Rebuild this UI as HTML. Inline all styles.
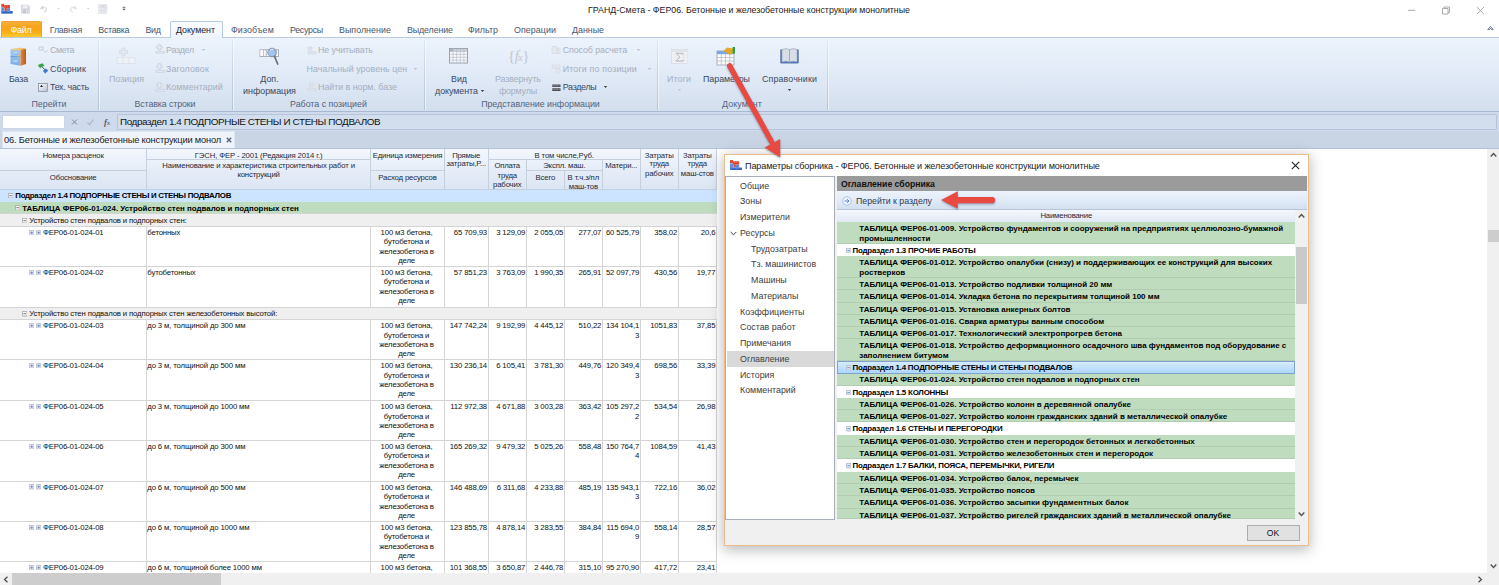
<!DOCTYPE html><html><head><meta charset="utf-8"><title>ГРАНД-Смета</title><style>
*{margin:0;padding:0;box-sizing:border-box}
html,body{width:1499px;height:585px;overflow:hidden;background:#fff}
body{font-family:"Liberation Sans",sans-serif;position:relative;color:#1e1e1e}
.b{position:absolute}
.t{position:absolute;white-space:nowrap;overflow:visible}
.rb{font-size:8.9px;color:#3a4962}
.rbd{font-size:8.9px;color:#a5afc0}
.rg{font-size:8.9px;color:#52647f}
.tab{font-size:8.9px;color:#48566e}
.ttl{font-size:8.8px;color:#222}
.fx{font-size:9.3px;color:#111}
.dt{font-size:8.95px;color:#222}
.h{font-size:7.75px;color:#1f2a3a}
.c{font-size:7.75px;color:#111}
.cb{font-size:7.9px;font-weight:700;color:#000}
.tb{font-size:7.9px;font-weight:700;color:#000}
.db{font-size:8.0px;font-weight:700;color:#000}
.dsb{font-size:7.9px;font-weight:700;color:#000}
.dl{font-size:8.87px;color:#222}
.mn{font-size:8.85px;color:#404040}
</style></head><body>
<div class="t ttl" style="top:4.00px;line-height:12px;height:12px;left:499.00px;width:500px;text-align:center;">ГРАНД-Смета - ФЕР06. Бетонные и железобетонные конструкции монолитные</div>
<svg class="b" style="left:1400px;top:0" width="99" height="20" viewBox="0 0 99 20"><g stroke="#a3a3a3" stroke-width="0.900" fill="none"><path d="M8 10.300h7.200"/><path d="M42.500 8.500h5.500v5.500h-5.500z M44 8.500v-1.500h5.500v5.500h-1.500"/><path d="M76.800 7l7.200 7.200M84 7l-7.200 7.200"/></g></svg>
<svg class="b" style="left:0;top:0" width="140" height="20" viewBox="0 0 140 20"><g><g transform="translate(1.300,3.800) scale(0.950)"><rect x="0" y="7.600" width="12" height="2.800" fill="#3568c6"/><rect x="0" y="3.600" width="3.100" height="5" fill="#5a8fe2"/><rect x="5.600" y="4.600" width="3.600" height="4" fill="#5a8fe2"/><rect x="0" y="0" width="3" height="3.300" fill="#e2432f"/><rect x="3" y="1.300" width="6.100" height="3.300" fill="#e2432f"/><rect x="3.500" y="4.500" width="2.200" height="2.900" fill="#d93a28"/><path d="M0.800 1h0.800M3.800 2.300h0.800M6.300 2.300h0.800" stroke="#f7c0b6" stroke-width="0.600"/></g><path d="M21.300 5h7l1.200 1.200v7h-8.200z" fill="#d9dce2" stroke="#c9ccd4" stroke-width="0.500"/><rect x="23" y="5.300" width="4.500" height="2.800" fill="#eef0f3"/><rect x="23" y="9.800" width="5" height="3.400" fill="#c3c7cf"/><rect x="26.200" y="10.300" width="1.200" height="2.400" fill="#eef0f3"/><path d="M40.500 8.500l2.500-2.500M40.500 8.500l3 0.500M41 8.200q4-2.500 5.500 0.800q0.500 2.500-2.500 3.200" stroke="#cfd2d9" fill="none" stroke-width="1"/><path d="M76.500 8.500l-2.500-2.500M76.500 8.500l-3 0.500M76 8.200q-4-2.500-5.500 0.800q-0.500 2.500 2.500 3.200" stroke="#d9dbe1" fill="none" stroke-width="1"/><rect x="98.500" y="4.500" width="8.500" height="9" fill="#e9ebef" stroke="#dadde3" stroke-width="0.500"/><path d="M98.500 7.500h8.500M98.500 10.500h8.500M101.500 7.500v6M104.300 7.500v6" stroke="#d5d8df" stroke-width="0.500"/><rect x="100" y="5.200" width="5.500" height="1.500" fill="#d5d8df"/><path d="M57.500 8h2.200l-1.100 1.300z M87 8h2.200l-1.100 1.300z" fill="#c2c5cc"/><path d="M122.600 7.300h2.800" stroke="#444" stroke-width="0.800"/><path d="M122.400 8.800h3.200l-1.600 1.800z" fill="#444"/></g></svg>
<div class="b " style="left:0.00px;top:37.00px;width:1499.00px;height:1.00px;background:#bccbe0"></div>
<div class="b " style="left:0.70px;top:21.20px;width:41.00px;height:16.30px;background:linear-gradient(#f7b03a 0%,#f7a41c 30%,#f9a60f 55%,#fbbd22 85%,#fccb30 100%);border:1px solid #eea030;border-bottom:none;border-radius:2px 2px 0 0"></div>
<div class="t tab" style="top:24.00px;line-height:12px;height:12px;letter-spacing:-0.220px;left:-0.11px;width:42px;text-align:center;color:#fff">Файл</div>
<div class="b " style="left:170.00px;top:21.00px;width:53.00px;height:17.20px;background:linear-gradient(#fbfcfe,#eef3fb);border:1px solid #b9c9df;border-bottom:none;border-radius:2px 2px 0 0"></div>
<div class="t tab" style="top:24.00px;line-height:12px;height:12px;letter-spacing:-0.225px;left:49.80px;">Главная</div>
<div class="t tab" style="top:24.00px;line-height:12px;height:12px;letter-spacing:-0.297px;left:98.30px;">Вставка</div>
<div class="t tab" style="top:24.00px;line-height:12px;height:12px;letter-spacing:-0.367px;left:145.50px;">Вид</div>
<div class="t tab" style="top:24.00px;line-height:12px;height:12px;letter-spacing:-0.060px;left:176.00px;color:#1e2430">Документ</div>
<div class="t tab" style="top:24.00px;line-height:12px;height:12px;letter-spacing:0.112px;left:231.00px;">Физобъем</div>
<div class="t tab" style="top:24.00px;line-height:12px;height:12px;letter-spacing:-0.299px;left:290.00px;">Ресурсы</div>
<div class="t tab" style="top:24.00px;line-height:12px;height:12px;letter-spacing:0.020px;left:339.00px;">Выполнение</div>
<div class="t tab" style="top:24.00px;line-height:12px;height:12px;letter-spacing:-0.129px;left:407.00px;">Выделение</div>
<div class="t tab" style="top:24.00px;line-height:12px;height:12px;letter-spacing:0.017px;left:468.00px;">Фильтр</div>
<div class="t tab" style="top:24.00px;line-height:12px;height:12px;letter-spacing:0.046px;left:514.00px;">Операции</div>
<div class="t tab" style="top:24.00px;line-height:12px;height:12px;letter-spacing:-0.025px;left:572.00px;">Данные</div>
<svg class="b" style="left:1487px;top:25px" width="7" height="6" viewBox="0 0 7 6"><path d="M0.800 4.600l2.700-3.200 2.700 3.200h-1.600l-1.100-1.300-1.100 1.300z" fill="#fff" stroke="#5a6478" stroke-width="0.900" stroke-linejoin="round"/></svg>
<div class="b " style="left:0.00px;top:38.00px;width:1499.00px;height:73.50px;background:linear-gradient(#ecf3fc 0%,#e3ecf8 40%,#d7e2f1 85%,#d3dfee 100%)"></div>
<div class="b " style="left:0.00px;top:111.00px;width:1499.00px;height:1.20px;background:#a9b9cf"></div>
<div class="b " style="left:98.30px;top:40.00px;width:1.00px;height:70.00px;background:linear-gradient(rgba(190,203,222,0.3),#b7c5da)"></div>
<div class="b " style="left:99.30px;top:40.00px;width:1.00px;height:70.00px;background:rgba(255,255,255,0.55)"></div>
<div class="b " style="left:232.30px;top:40.00px;width:1.00px;height:70.00px;background:linear-gradient(rgba(190,203,222,0.3),#b7c5da)"></div>
<div class="b " style="left:233.30px;top:40.00px;width:1.00px;height:70.00px;background:rgba(255,255,255,0.55)"></div>
<div class="b " style="left:424.40px;top:40.00px;width:1.00px;height:70.00px;background:linear-gradient(rgba(190,203,222,0.3),#b7c5da)"></div>
<div class="b " style="left:425.40px;top:40.00px;width:1.00px;height:70.00px;background:rgba(255,255,255,0.55)"></div>
<div class="b " style="left:657.30px;top:40.00px;width:1.00px;height:70.00px;background:linear-gradient(rgba(190,203,222,0.3),#b7c5da)"></div>
<div class="b " style="left:658.30px;top:40.00px;width:1.00px;height:70.00px;background:rgba(255,255,255,0.55)"></div>
<div class="b " style="left:827.30px;top:40.00px;width:1.00px;height:70.00px;background:linear-gradient(rgba(190,203,222,0.3),#b7c5da)"></div>
<div class="b " style="left:828.30px;top:40.00px;width:1.00px;height:70.00px;background:rgba(255,255,255,0.55)"></div>
<div class="t rg" style="top:98.00px;line-height:12px;height:12px;letter-spacing:-0.038px;left:-51.02px;width:200px;text-align:center;">Перейти</div>
<div class="t rg" style="top:98.00px;line-height:12px;height:12px;letter-spacing:-0.131px;left:64.93px;width:200px;text-align:center;">Вставка строки</div>
<div class="t rg" style="top:98.00px;line-height:12px;height:12px;letter-spacing:-0.028px;left:228.49px;width:200px;text-align:center;">Работа с позицией</div>
<div class="t rg" style="top:98.00px;line-height:12px;height:12px;letter-spacing:-0.036px;left:440.48px;width:200px;text-align:center;">Представление информации</div>
<div class="t rg" style="top:98.00px;line-height:12px;height:12px;letter-spacing:0.065px;left:642.03px;width:200px;text-align:center;">Документ</div>
<svg class="b" style="left:9px;top:46px" width="19" height="22" viewBox="0 0 19 22"><defs><linearGradient id="cb1" x1="0" y1="0" x2="0" y2="1"><stop offset="0" stop-color="#a9cdf2"/><stop offset="1" stop-color="#7eaee6"/></linearGradient><linearGradient id="cb2" x1="0" y1="0" x2="1" y2="0"><stop offset="0" stop-color="#e58a3a"/><stop offset="1" stop-color="#b85a18"/></linearGradient></defs><path d="M1.5 3.2l10-1.5v18l-10-1.6z" fill="url(#cb1)"/><path d="M11.5 1.7l5.5 1.3v15l-5.5 1.7z" fill="url(#cb2)"/><path d="M1.5 3.2l10-1.5 5.5 1.3-3 0.6-8.500 0.900z" fill="#f6c779"/><path d="M1.5 10.600l10 0.100" stroke="#5f8fcc" stroke-width="0.700"/><path d="M4 6.200l4.500-0.400v1.500l-4.500 0.300z M4 14.300l4.500 0.200v1.500l-4.500-0.300z" fill="#d9e9fa" stroke="#7ea3d6" stroke-width="0.300"/><path d="M7.500 10.300l1.800-1.600 1.800 1.700z" fill="#f0c24d"/></svg>
<div class="t rb" style="top:73.00px;line-height:12px;height:12px;letter-spacing:-0.180px;left:-11.59px;width:60px;text-align:center;">База</div>
<svg class="b" style="left:38px;top:45px" width="11" height="10" viewBox="0 0 11 10"><path d="M1 2h4v3h-4z M5.5 5.5l2 2 2-2" stroke="#c3cad6" fill="none" stroke-width="0.9"/></svg>
<div class="t rbd" style="top:43.80px;line-height:12px;height:12px;letter-spacing:-0.425px;left:50.00px;">Смета</div>
<svg class="b" style="left:38px;top:63px" width="11" height="11" viewBox="0 0 11 11"><path d="M3.800 3.500l3.500 3.800" stroke="#444" stroke-width="0.900"/><path d="M0.300 1.800l4-1.500 2.300 2.500-4 1.800z" fill="#35a844"/><path d="M0.300 1.800l2.300 2.800v1l-2.300-2.700z" fill="#1f7d2c"/><path d="M5.300 7.600l2.500-2.100 2.500 2.100-2.500 2.300z" fill="#3a78dc"/><path d="M5.300 7.600l2.500 2.300v0.800l-2.500-2.200z" fill="#2455a8"/></svg>
<div class="t rb" style="top:62.80px;line-height:12px;height:12px;letter-spacing:0.114px;left:50.00px;">Сборник</div>
<svg class="b" style="left:38px;top:82.500px" width="10" height="9" viewBox="0 0 10 9"><defs><linearGradient id="tc" x1="0" y1="0" x2="1" y2="1"><stop offset="0" stop-color="#ffffff"/><stop offset="1" stop-color="#b9c3d6"/></linearGradient></defs><rect x="0.500" y="0.500" width="8.800" height="7.800" fill="url(#tc)" stroke="#7a8190" stroke-width="0.700"/><path d="M2 4l1.500-2.200 1.500 2.200z" fill="#222"/></svg>
<div class="t rb" style="top:81.30px;line-height:12px;height:12px;letter-spacing:-0.283px;left:50.00px;">Тех. часть</div>
<svg class="b" style="left:116px;top:47px" width="20" height="18" viewBox="0 0 20 18"><path d="M6 1h3v2.5h2.5v3h-2.5v2.5h-3v-2.5h-2.5v-3h2.5z" fill="#e3e8f0" stroke="#cfd6e2" stroke-width="0.6"/><rect x="1" y="10.5" width="18" height="6" fill="#eef1f6" stroke="#d5dbe6" stroke-width="0.6"/><path d="M7 10.5v6M13 10.5v6" stroke="#d5dbe6" stroke-width="0.6"/></svg>
<div class="t rbd" style="top:73.00px;line-height:12px;height:12px;letter-spacing:-0.027px;left:86.49px;width:80px;text-align:center;">Позиция</div>
<svg class="b" style="left:155px;top:44.3px" width="10" height="10" viewBox="0 0 10 10"><path d="M3.500 0.500h2v1.800h1.800v2h-1.800v1.800h-2v-1.800h-1.800v-2h1.800z M1 7.300h8.500v2h-8.500z" fill="#e6eaf1" stroke="#c3cad7" stroke-width="0.600"/></svg>
<div class="t rbd" style="top:43.80px;line-height:12px;height:12px;letter-spacing:-0.236px;left:166.00px;">Раздел</div>
<svg class="b" style="left:155px;top:63.3px" width="10" height="10" viewBox="0 0 10 10"><path d="M3.500 0.500h2v1.800h1.800v2h-1.800v1.800h-2v-1.800h-1.800v-2h1.800z M1 7.300h8.500v2h-8.500z" fill="#e6eaf1" stroke="#c3cad7" stroke-width="0.600"/></svg>
<div class="t rbd" style="top:62.80px;line-height:12px;height:12px;letter-spacing:0.129px;left:166.00px;">Заголовок</div>
<svg class="b" style="left:155px;top:81.8px" width="10" height="10" viewBox="0 0 10 10"><path d="M3.500 0.500h2v1.800h1.800v2h-1.800v1.800h-2v-1.800h-1.800v-2h1.800z M1 7.300h8.500v2h-8.500z" fill="#e6eaf1" stroke="#c3cad7" stroke-width="0.600"/></svg>
<div class="t rbd" style="top:81.30px;line-height:12px;height:12px;letter-spacing:0.086px;left:166.00px;">Комментарий</div>
<svg class="b" style="left:201px;top:48px" width="5" height="4" viewBox="0 0 5 4"><path d="M0.800 1h3.400l-1.700 2z" fill="#b9c1ce"/></svg>
<svg class="b" style="left:258px;top:46px" width="24" height="22" viewBox="0 0 24 22"><rect x="2" y="3.800" width="18.600" height="6.600" fill="#f7f8fb" stroke="#9aa1ad" stroke-width="0.800"/><path d="M5.300 3.800v6.600M8.300 3.800v6.600M17.500 3.800v6.600" stroke="#9aa1ad" stroke-width="0.700"/><rect x="2.400" y="4.200" width="2.600" height="5.800" fill="#fff"/><circle cx="14.100" cy="6.500" r="4.300" fill="#8db6ea" fill-opacity="0.800" stroke="#8893a8" stroke-width="1"/><path d="M11.800 4.600q1.500-1.700 3.500-1.200" stroke="#e8f1fc" stroke-width="1" fill="none"/><path d="M16.500 10.300l3.200 7.700" stroke="#6a707c" stroke-width="1.700" stroke-linecap="round"/></svg>
<div class="t rb" style="top:73.30px;line-height:12px;height:12px;left:229.50px;width:80px;text-align:center;">Доп.</div>
<div class="t rb" style="top:85.00px;line-height:12px;height:12px;letter-spacing:-0.006px;left:229.50px;width:80px;text-align:center;">информация</div>
<svg class="b" style="left:307px;top:45px" width="10" height="10" viewBox="0 0 10 10"><path d="M1 2h4v3h-4z M1 6.5h8v2.5h-8z" fill="#dfe4ec" stroke="#cdd3de" stroke-width="0.5"/></svg>
<div class="t rbd" style="top:43.80px;line-height:12px;height:12px;letter-spacing:-0.123px;left:318.00px;">Не учитывать</div>
<div class="t rbd" style="top:62.80px;line-height:12px;height:12px;letter-spacing:0.045px;left:306.50px;">Начальный уровень цен</div>
<svg class="b" style="left:413px;top:66.5px" width="5" height="4" viewBox="0 0 5 4"><path d="M0.800 1h3.400l-1.700 2z" fill="#b9c1ce"/></svg>
<svg class="b" style="left:307px;top:82px" width="10" height="10" viewBox="0 0 10 10"><path d="M2.5 1h3.5v4h-3.5z M1 6.5h8v2.5h-8z" fill="#dfe4ec" stroke="#cdd3de" stroke-width="0.5"/></svg>
<div class="t rbd" style="top:81.30px;line-height:12px;height:12px;letter-spacing:-0.034px;left:318.00px;">Найти в норм. базе</div>
<svg class="b" style="left:449.300px;top:48.300px" width="19" height="15.500" viewBox="0 0 19 15.500"><rect x="0.500" y="0.500" width="18" height="14.500" fill="#f6f7fa" stroke="#9299a6" stroke-width="0.900"/><rect x="0.900" y="0.900" width="17.200" height="2.400" fill="#c9ced8"/><rect x="0.900" y="0.900" width="3" height="2.400" fill="#aab1be"/><path d="M0.500 3.500h18M0.500 6.400h18M0.500 9.300h18M0.500 12.200h18M4.100 0.500v14.500M7.700 0.500v14.500M11.300 0.500v14.500M14.900 0.500v14.500" stroke="#b1b7c3" stroke-width="0.600"/></svg>
<div class="t rb" style="top:73.30px;line-height:12px;height:12px;left:419.00px;width:80px;text-align:center;">Вид</div>
<div class="t rb" style="top:85.00px;line-height:12px;height:12px;letter-spacing:-0.044px;left:416.48px;width:80px;text-align:center;">документа</div>
<svg class="b" style="left:479.5px;top:88.5px" width="5" height="4" viewBox="0 0 5 4"><path d="M0.800 1h3.400l-1.700 2z" fill="#444"/></svg>
<div class="t" style="left:498.400px;top:45px;width:40px;height:22px;line-height:22px;text-align:center;font-family:'Liberation Serif',serif;font-size:15.500px;color:#c2c7d1;letter-spacing:-0.6px">{<i style="font-size:14.500px">f</i><i style="font-size:10.500px">x</i>}</div>
<div class="t rbd" style="top:73.30px;line-height:12px;height:12px;letter-spacing:-0.117px;left:477.94px;width:80px;text-align:center;">Развернуть</div>
<div class="t rbd" style="top:85.00px;line-height:12px;height:12px;letter-spacing:-0.183px;left:477.91px;width:80px;text-align:center;">формулы</div>
<svg class="b" style="left:551px;top:45px" width="10" height="10" viewBox="0 0 10 10"><path d="M1 1.5h5v7h-5z M6.5 3h2.5v5.5h-2.5z" fill="#e3e7ee" stroke="#cdd3de" stroke-width="0.5"/></svg>
<div class="t rbd" style="top:43.80px;line-height:12px;height:12px;letter-spacing:-0.088px;left:562.70px;">Способ расчета</div>
<svg class="b" style="left:635.5px;top:48px" width="5" height="4" viewBox="0 0 5 4"><path d="M0.800 1h3.400l-1.700 2z" fill="#b9c1ce"/></svg>
<svg class="b" style="left:551px;top:63.5px" width="10" height="10" viewBox="0 0 10 10"><path d="M1 1h8v3h-8z M5 5h4v4h-4z" fill="#e3e7ee" stroke="#cdd3de" stroke-width="0.5"/></svg>
<div class="t rbd" style="top:62.80px;line-height:12px;height:12px;letter-spacing:0.155px;left:562.70px;">Итоги по позиции</div>
<svg class="b" style="left:646.5px;top:66.5px" width="5" height="4" viewBox="0 0 5 4"><path d="M0.800 1h3.400l-1.700 2z" fill="#b9c1ce"/></svg>
<svg class="b" style="left:552px;top:83.5px" width="9" height="8" viewBox="0 0 9 8"><path d="M0.300 0.400h8.200v2.700h-8.200z M0.300 4.200h8.200v2.700h-8.200z" fill="#4d4f55"/><path d="M1.500 1.750h6M1.500 5.550h6" stroke="#b5b7bd" stroke-width="0.700" stroke-dasharray="1.200 0.600"/></svg>
<div class="t rb" style="top:81.30px;line-height:12px;height:12px;letter-spacing:-0.302px;left:562.80px;">Разделы</div>
<svg class="b" style="left:603px;top:85px" width="5" height="4" viewBox="0 0 5 4"><path d="M0.800 1h3.400l-1.700 2z" fill="#444"/></svg>
<svg class="b" style="left:670.500px;top:49px" width="17.500" height="15" viewBox="0 0 17.500 15"><rect x="0.500" y="0.500" width="16.500" height="14" fill="#f1f2f5" stroke="#d6d9e0" stroke-width="0.700"/><rect x="0.500" y="0.500" width="16.500" height="2.300" fill="#e0e2e8"/><path d="M0.500 5.700h16.500M0.500 8.600h16.500M0.500 11.500h16.500M4.500 2.800v11.700M12.800 2.800v11.700" stroke="#e1e3e9" stroke-width="0.500"/><path d="M12 5.600v-1.300h-6.800l3.500 3.800-3.500 4h6.800v-1.400" stroke="#b3b7c1" stroke-width="1" fill="none"/></svg>
<div class="t rbd" style="top:73.30px;line-height:12px;height:12px;letter-spacing:0.092px;left:649.05px;width:60px;text-align:center;">Итоги</div>
<svg class="b" style="left:676.5px;top:87.5px" width="5" height="4" viewBox="0 0 5 4"><path d="M0.800 1h3.400l-1.700 2z" fill="#c3cad6"/></svg>
<svg class="b" style="left:716px;top:46px" width="20" height="20" viewBox="0 0 20 20"><rect x="1" y="5" width="17" height="14" fill="#fbfbfb" stroke="#9aa0aa" stroke-width="0.8"/><rect x="1" y="5" width="17" height="3.2" fill="#7da7e3"/><path d="M1 11.5h17M1 15h17M5.3 8v11M9.5 8v11M13.8 8v11" stroke="#b3b8c2" stroke-width="0.7"/><path d="M7 5.5l4-4 6 1 0.5 4.5-4 2-2.5-2.5z" fill="#e0a92e"/><rect x="16.6" y="1" width="2.4" height="6.5" fill="#2f9e3d"/></svg>
<div class="t rb" style="top:73.30px;line-height:12px;height:12px;letter-spacing:-0.049px;left:686.48px;width:80px;text-align:center;">Параметры</div>
<svg class="b" style="left:780px;top:47px" width="19" height="18" viewBox="0 0 19 18"><path d="M0.8 2.5v13.5h17.4v-13.5" fill="#5b7fc4" stroke="#3c5fa6" stroke-width="0.8"/><path d="M2 15q4-1.6 7.5 0v-12.5q-3.5-1.8-7.5 0z M17 15q-4-1.6-7.5 0v-12.5q3.500-1.8 7.5 0z" fill="#d9dde5" stroke="#93a2bf" stroke-width="0.600"/></svg>
<div class="t rb" style="top:73.30px;line-height:12px;height:12px;letter-spacing:0.099px;left:744.55px;width:90px;text-align:center;">Справочники</div>
<svg class="b" style="left:787px;top:87.5px" width="5" height="4" viewBox="0 0 5 4"><path d="M0.800 1h3.400l-1.700 2z" fill="#444"/></svg>
<div class="b " style="left:0.00px;top:112.20px;width:1499.00px;height:19.00px;background:#cfdbec"></div>
<div class="b " style="left:2.00px;top:114.50px;width:62.60px;height:14.50px;background:#fff;border:1px solid #cbd6e6"></div>
<div class="b " style="left:116.80px;top:114.30px;width:1380.50px;height:15.30px;background:#d2deee;border:1px solid #b5c4da;border-radius:1px"></div>
<svg class="b" style="left:68px;top:116px" width="48" height="12" viewBox="0 0 48 12"><path d="M4 3.500l5 5M9 3.500l-5 5" stroke="#7f8a9c" stroke-width="1" fill="none"/><path d="M19.500 6.500l2 2.300 4-5.300" stroke="#a9b2c2" stroke-width="1.100" fill="none"/></svg>
<div class="t" style="left:104px;top:115.5px;font-family:'Liberation Serif',serif;font-style:italic;font-weight:700;font-size:9px;line-height:12px;color:#596273">f<span style="font-size:6px">x</span></div>
<div class="t fx" style="top:116.00px;line-height:12px;height:12px;font-size:9.9px;letter-spacing:-0.385px;left:120.00px;">Подраздел 1.4 ПОДПОРНЫЕ СТЕНЫ И СТЕНЫ ПОДВАЛОВ</div>
<div class="b " style="left:0.00px;top:131.00px;width:1499.00px;height:17.60px;background:#c9d5e5"></div>
<div class="b " style="left:2.20px;top:130.50px;width:233.00px;height:18.10px;background:#eff4fb;border:1px solid #dde5f1;border-bottom:none"></div>
<div class="t dt" style="top:133.60px;line-height:12px;height:12px;font-size:9.3px;letter-spacing:-0.187px;left:4.00px;">06. Бетонные и железобетонные конструкции монол</div>
<svg class="b" style="left:225.5px;top:136.5px" width="6" height="6" viewBox="0 0 6 6"><path d="M0.800 0.800l4.400 4.400M5.200 0.800l-4.400 4.400" stroke="#56627a" stroke-width="1.350" fill="none"/></svg>
<div class="b " style="left:0.00px;top:148.20px;width:1499.00px;height:0.80px;background:#b3c1d6"></div>
<div class="b " style="left:0.00px;top:149.00px;width:716.50px;height:40.50px;background:linear-gradient(#f3f7fd 0%,#e6edf8 50%,#dbe5f3 100%)"></div>
<div class="b " style="left:146.00px;top:149.00px;width:1.00px;height:40.50px;background:#c6cfdd"></div>
<div class="b " style="left:370.30px;top:149.00px;width:1.00px;height:40.50px;background:#c6cfdd"></div>
<div class="b " style="left:443.90px;top:149.00px;width:1.00px;height:40.50px;background:#c6cfdd"></div>
<div class="b " style="left:487.70px;top:149.00px;width:1.00px;height:40.50px;background:#c6cfdd"></div>
<div class="b " style="left:639.80px;top:149.00px;width:1.00px;height:40.50px;background:#c6cfdd"></div>
<div class="b " style="left:677.80px;top:149.00px;width:1.00px;height:40.50px;background:#c6cfdd"></div>
<div class="b " style="left:716.00px;top:149.00px;width:1.00px;height:40.50px;background:#c6cfdd"></div>
<div class="b " style="left:525.90px;top:159.50px;width:1.00px;height:30.00px;background:#c6cfdd"></div>
<div class="b " style="left:601.90px;top:159.50px;width:1.00px;height:30.00px;background:#c6cfdd"></div>
<div class="b " style="left:563.90px;top:170.30px;width:1.00px;height:19.20px;background:#c6cfdd"></div>
<div class="b " style="left:0.00px;top:170.00px;width:146.50px;height:1.00px;background:#c6cfdd"></div>
<div class="b " style="left:146.50px;top:159.20px;width:224.30px;height:1.00px;background:#c6cfdd"></div>
<div class="b " style="left:370.80px;top:170.00px;width:73.60px;height:1.00px;background:#c6cfdd"></div>
<div class="b " style="left:488.20px;top:159.20px;width:152.10px;height:1.00px;background:#c6cfdd"></div>
<div class="b " style="left:526.40px;top:170.00px;width:76.00px;height:1.00px;background:#c6cfdd"></div>
<div class="b " style="left:0.00px;top:189.00px;width:716.50px;height:1.00px;background:#c6cfdd"></div>
<div class="t h" style="top:149.50px;line-height:12px;height:12px;letter-spacing:-0.164px;left:3.17px;width:140px;text-align:center;">Номера расценок</div>
<div class="t h" style="top:171.80px;line-height:12px;height:12px;letter-spacing:-0.171px;left:3.16px;width:140px;text-align:center;">Обоснование</div>
<div class="t h" style="top:149.50px;line-height:12px;height:12px;letter-spacing:-0.147px;left:148.58px;width:220px;text-align:center;">ГЭСН, ФЕР - 2001 (Редакция 2014 г.)</div>
<div class="t h" style="top:160.20px;line-height:12px;height:12px;letter-spacing:-0.155px;left:148.57px;width:220px;text-align:center;">Наименование и характеристика строительных работ и</div>
<div class="t h" style="top:169.30px;line-height:12px;height:12px;letter-spacing:-0.155px;left:148.57px;width:220px;text-align:center;">конструкций</div>
<div class="t h" style="top:149.50px;line-height:12px;height:12px;letter-spacing:-0.165px;left:367.52px;width:80px;text-align:center;">Единица измерения</div>
<div class="t h" style="top:171.80px;line-height:12px;height:12px;letter-spacing:-0.157px;left:367.52px;width:80px;text-align:center;">Расход ресурсов</div>
<div class="t h" style="top:149.50px;line-height:12px;height:12px;letter-spacing:-0.188px;left:436.21px;width:60px;text-align:center;">Прямые</div>
<div class="t h" style="top:158.40px;line-height:12px;height:12px;letter-spacing:-0.133px;left:436.23px;width:60px;text-align:center;">затраты,Р...</div>
<div class="t h" style="top:149.50px;line-height:12px;height:12px;letter-spacing:-0.149px;left:504.18px;width:120px;text-align:center;">В том числе,Руб.</div>
<div class="t h" style="top:160.20px;line-height:12px;height:12px;letter-spacing:-0.172px;left:482.21px;width:50px;text-align:center;">Оплата</div>
<div class="t h" style="top:169.60px;line-height:12px;height:12px;letter-spacing:-0.157px;left:482.22px;width:50px;text-align:center;">труда</div>
<div class="t h" style="top:179.00px;line-height:12px;height:12px;letter-spacing:-0.163px;left:482.22px;width:50px;text-align:center;">рабочих</div>
<div class="t h" style="top:160.20px;line-height:12px;height:12px;letter-spacing:-0.155px;left:529.32px;width:70px;text-align:center;">Экспл. маш.</div>
<div class="t h" style="top:171.50px;line-height:12px;height:12px;letter-spacing:-0.157px;left:525.32px;width:40px;text-align:center;">Всего</div>
<div class="t h" style="top:171.50px;line-height:12px;height:12px;letter-spacing:-0.127px;left:563.34px;width:40px;text-align:center;">В т.ч.з/пл</div>
<div class="t h" style="top:180.80px;line-height:12px;height:12px;letter-spacing:-0.168px;left:563.32px;width:40px;text-align:center;">маш-тов</div>
<div class="t h" style="top:160.20px;line-height:12px;height:12px;letter-spacing:-0.144px;left:601.28px;width:40px;text-align:center;">Матери...</div>
<div class="t h" style="top:149.50px;line-height:12px;height:12px;letter-spacing:-0.166px;left:639.22px;width:40px;text-align:center;">Затраты</div>
<div class="t h" style="top:158.40px;line-height:12px;height:12px;letter-spacing:-0.157px;left:639.22px;width:40px;text-align:center;">труда</div>
<div class="t h" style="top:167.60px;line-height:12px;height:12px;letter-spacing:-0.163px;left:639.22px;width:40px;text-align:center;">рабочих</div>
<div class="t h" style="top:149.50px;line-height:12px;height:12px;letter-spacing:-0.166px;left:677.32px;width:40px;text-align:center;">Затраты</div>
<div class="t h" style="top:158.40px;line-height:12px;height:12px;letter-spacing:-0.157px;left:677.32px;width:40px;text-align:center;">труда</div>
<div class="t h" style="top:167.60px;line-height:12px;height:12px;letter-spacing:-0.165px;left:677.32px;width:40px;text-align:center;">маш-стов</div>
<div class="b " style="left:0.00px;top:189.80px;width:716.50px;height:12.00px;background:#cce4ff"></div>
<svg class="b" style="left:8.00px;top:192.60px" width="5.4" height="5.4" viewBox="0 0 6 6"><rect x="0.4" y="0.4" width="5.2" height="5.2" rx="0.8" fill="#fff" stroke="#8e8e8e" stroke-width="0.8"/><path d="M1.5 3h3" stroke="#444" stroke-width="0.8"/></svg>
<div class="t cb" style="top:190.00px;line-height:12px;height:12px;letter-spacing:-0.304px;left:15.30px;">Подраздел 1.4 ПОДПОРНЫЕ СТЕНЫ И СТЕНЫ ПОДВАЛОВ</div>
<div class="b " style="left:0.00px;top:201.80px;width:716.50px;height:12.20px;background:#bfdcbf"></div>
<svg class="b" style="left:15.00px;top:204.80px" width="5.4" height="5.4" viewBox="0 0 6 6"><rect x="0.4" y="0.4" width="5.2" height="5.2" rx="0.8" fill="#fff" stroke="#8e8e8e" stroke-width="0.8"/><path d="M1.5 3h3" stroke="#444" stroke-width="0.8"/></svg>
<div class="t tb" style="top:202.60px;line-height:12px;height:12px;left:22.30px;">ТАБЛИЦА ФЕР06-01-024. Устройство стен подвалов и подпорных стен</div>
<div class="b " style="left:0.00px;top:213.90px;width:716.50px;height:12.50px;background:#efefef"></div>
<div class="b " style="left:0.00px;top:213.40px;width:716.50px;height:1.00px;background:#d4d4d4"></div>
<div class="b " style="left:0.00px;top:225.90px;width:716.50px;height:1.00px;background:#d4d4d4"></div>
<svg class="b" style="left:22.00px;top:217.95px" width="5.4" height="5.4" viewBox="0 0 6 6"><rect x="0.4" y="0.4" width="5.2" height="5.2" rx="0.8" fill="#fff" stroke="#8e8e8e" stroke-width="0.8"/><path d="M1.5 3h3" stroke="#444" stroke-width="0.8"/></svg>
<div class="t c" style="top:215.05px;line-height:12px;height:12px;letter-spacing:-0.140px;left:29.20px;">Устройство стен подвалов и подпорных стен:</div>
<div class="b " style="left:0.00px;top:307.40px;width:716.50px;height:12.10px;background:#efefef"></div>
<div class="b " style="left:0.00px;top:306.90px;width:716.50px;height:1.00px;background:#d4d4d4"></div>
<div class="b " style="left:0.00px;top:319.00px;width:716.50px;height:1.00px;background:#d4d4d4"></div>
<svg class="b" style="left:22.00px;top:311.25px" width="5.4" height="5.4" viewBox="0 0 6 6"><rect x="0.4" y="0.4" width="5.2" height="5.2" rx="0.8" fill="#fff" stroke="#8e8e8e" stroke-width="0.8"/><path d="M1.5 3h3" stroke="#444" stroke-width="0.8"/></svg>
<div class="t c" style="top:308.35px;line-height:12px;height:12px;letter-spacing:-0.143px;left:29.20px;">Устройство стен подвалов и подпорных стен железобетонных высотой:</div>
<div class="b " style="left:0.00px;top:265.90px;width:716.50px;height:1.00px;background:#d4d4d4"></div>
<div class="b " style="left:146.00px;top:226.40px;width:1.00px;height:40.00px;background:#d4d4d4"></div>
<div class="b " style="left:370.30px;top:226.40px;width:1.00px;height:40.00px;background:#d4d4d4"></div>
<div class="b " style="left:443.90px;top:226.40px;width:1.00px;height:40.00px;background:#d4d4d4"></div>
<div class="b " style="left:487.70px;top:226.40px;width:1.00px;height:40.00px;background:#d4d4d4"></div>
<div class="b " style="left:525.90px;top:226.40px;width:1.00px;height:40.00px;background:#d4d4d4"></div>
<div class="b " style="left:563.90px;top:226.40px;width:1.00px;height:40.00px;background:#d4d4d4"></div>
<div class="b " style="left:601.90px;top:226.40px;width:1.00px;height:40.00px;background:#d4d4d4"></div>
<div class="b " style="left:639.80px;top:226.40px;width:1.00px;height:40.00px;background:#d4d4d4"></div>
<div class="b " style="left:677.80px;top:226.40px;width:1.00px;height:40.00px;background:#d4d4d4"></div>
<div class="b " style="left:716.00px;top:226.40px;width:1.00px;height:40.00px;background:#d4d4d4"></div>
<svg class="b" style="left:29.00px;top:229.50px" width="5.4" height="5.4" viewBox="0 0 6 6"><rect x="0.4" y="0.4" width="5.2" height="5.2" rx="0.600" fill="#e3e9f6" stroke="#a4abba" stroke-width="0.800"/><path d="M1.700 3h2.600M3 1.700v2.600" stroke="#5570b3" stroke-width="0.800"/></svg>
<svg class="b" style="left:36.00px;top:229.50px" width="5.4" height="5.4" viewBox="0 0 6 6"><rect x="0.4" y="0.4" width="5.2" height="5.2" rx="0.600" fill="#e3e9f6" stroke="#a4abba" stroke-width="0.800"/><path d="M1.700 3h2.600M3 1.700v2.600" stroke="#5570b3" stroke-width="0.800"/></svg>
<div class="t c" style="top:227.00px;line-height:12px;height:12px;letter-spacing:-0.151px;left:43.00px;">ФЕР06-01-024-01</div>
<div class="t c" style="top:227.00px;line-height:12px;height:12px;letter-spacing:-0.154px;left:147.30px;">бетонных</div>
<div class="t c" style="top:227.00px;line-height:12px;height:12px;letter-spacing:-0.139px;left:371.53px;width:70px;text-align:center;">100 м3 бетона,</div>
<div class="t c" style="top:236.40px;line-height:12px;height:12px;letter-spacing:-0.142px;left:371.53px;width:70px;text-align:center;">бутобетона и</div>
<div class="t c" style="top:245.80px;line-height:12px;height:12px;letter-spacing:-0.146px;left:371.53px;width:70px;text-align:center;">железобетона в</div>
<div class="t c" style="top:255.20px;line-height:12px;height:12px;letter-spacing:-0.157px;left:371.52px;width:70px;text-align:center;">деле</div>
<div class="t c" style="top:227.00px;line-height:12px;height:12px;letter-spacing:-0.138px;left:427.06px;width:60px;text-align:right;">65 709,93</div>
<div class="t c" style="top:227.00px;line-height:12px;height:12px;letter-spacing:-0.136px;left:465.26px;width:60px;text-align:right;">3 129,09</div>
<div class="t c" style="top:227.00px;line-height:12px;height:12px;letter-spacing:-0.136px;left:503.26px;width:60px;text-align:right;">2 055,05</div>
<div class="t c" style="top:227.00px;line-height:12px;height:12px;letter-spacing:-0.143px;left:541.26px;width:60px;text-align:right;">277,07</div>
<div class="t c" style="top:227.00px;line-height:12px;height:12px;letter-spacing:-0.138px;left:579.16px;width:60px;text-align:right;">60 525,79</div>
<div class="t c" style="top:227.00px;line-height:12px;height:12px;letter-spacing:-0.143px;left:617.16px;width:60px;text-align:right;">358,02</div>
<div class="t c" style="top:227.00px;line-height:12px;height:12px;letter-spacing:-0.136px;left:655.36px;width:60px;text-align:right;">20,6</div>
<div class="b " style="left:0.00px;top:306.90px;width:716.50px;height:1.00px;background:#d4d4d4"></div>
<div class="b " style="left:146.00px;top:266.40px;width:1.00px;height:41.00px;background:#d4d4d4"></div>
<div class="b " style="left:370.30px;top:266.40px;width:1.00px;height:41.00px;background:#d4d4d4"></div>
<div class="b " style="left:443.90px;top:266.40px;width:1.00px;height:41.00px;background:#d4d4d4"></div>
<div class="b " style="left:487.70px;top:266.40px;width:1.00px;height:41.00px;background:#d4d4d4"></div>
<div class="b " style="left:525.90px;top:266.40px;width:1.00px;height:41.00px;background:#d4d4d4"></div>
<div class="b " style="left:563.90px;top:266.40px;width:1.00px;height:41.00px;background:#d4d4d4"></div>
<div class="b " style="left:601.90px;top:266.40px;width:1.00px;height:41.00px;background:#d4d4d4"></div>
<div class="b " style="left:639.80px;top:266.40px;width:1.00px;height:41.00px;background:#d4d4d4"></div>
<div class="b " style="left:677.80px;top:266.40px;width:1.00px;height:41.00px;background:#d4d4d4"></div>
<div class="b " style="left:716.00px;top:266.40px;width:1.00px;height:41.00px;background:#d4d4d4"></div>
<svg class="b" style="left:29.00px;top:269.50px" width="5.4" height="5.4" viewBox="0 0 6 6"><rect x="0.4" y="0.4" width="5.2" height="5.2" rx="0.600" fill="#e3e9f6" stroke="#a4abba" stroke-width="0.800"/><path d="M1.700 3h2.600M3 1.700v2.600" stroke="#5570b3" stroke-width="0.800"/></svg>
<svg class="b" style="left:36.00px;top:269.50px" width="5.4" height="5.4" viewBox="0 0 6 6"><rect x="0.4" y="0.4" width="5.2" height="5.2" rx="0.600" fill="#e3e9f6" stroke="#a4abba" stroke-width="0.800"/><path d="M1.700 3h2.600M3 1.700v2.600" stroke="#5570b3" stroke-width="0.800"/></svg>
<div class="t c" style="top:267.00px;line-height:12px;height:12px;letter-spacing:-0.151px;left:43.00px;">ФЕР06-01-024-02</div>
<div class="t c" style="top:267.00px;line-height:12px;height:12px;letter-spacing:-0.151px;left:147.30px;">бутобетонных</div>
<div class="t c" style="top:267.00px;line-height:12px;height:12px;letter-spacing:-0.139px;left:371.53px;width:70px;text-align:center;">100 м3 бетона,</div>
<div class="t c" style="top:276.40px;line-height:12px;height:12px;letter-spacing:-0.142px;left:371.53px;width:70px;text-align:center;">бутобетона и</div>
<div class="t c" style="top:285.80px;line-height:12px;height:12px;letter-spacing:-0.146px;left:371.53px;width:70px;text-align:center;">железобетона в</div>
<div class="t c" style="top:295.20px;line-height:12px;height:12px;letter-spacing:-0.157px;left:371.52px;width:70px;text-align:center;">деле</div>
<div class="t c" style="top:267.00px;line-height:12px;height:12px;letter-spacing:-0.138px;left:427.06px;width:60px;text-align:right;">57 851,23</div>
<div class="t c" style="top:267.00px;line-height:12px;height:12px;letter-spacing:-0.136px;left:465.26px;width:60px;text-align:right;">3 763,09</div>
<div class="t c" style="top:267.00px;line-height:12px;height:12px;letter-spacing:-0.136px;left:503.26px;width:60px;text-align:right;">1 990,35</div>
<div class="t c" style="top:267.00px;line-height:12px;height:12px;letter-spacing:-0.143px;left:541.26px;width:60px;text-align:right;">265,91</div>
<div class="t c" style="top:267.00px;line-height:12px;height:12px;letter-spacing:-0.138px;left:579.16px;width:60px;text-align:right;">52 097,79</div>
<div class="t c" style="top:267.00px;line-height:12px;height:12px;letter-spacing:-0.143px;left:617.16px;width:60px;text-align:right;">430,56</div>
<div class="t c" style="top:267.00px;line-height:12px;height:12px;letter-spacing:-0.140px;left:655.36px;width:60px;text-align:right;">19,77</div>
<div class="b " style="left:0.00px;top:359.00px;width:716.50px;height:1.00px;background:#d4d4d4"></div>
<div class="b " style="left:146.00px;top:319.50px;width:1.00px;height:40.00px;background:#d4d4d4"></div>
<div class="b " style="left:370.30px;top:319.50px;width:1.00px;height:40.00px;background:#d4d4d4"></div>
<div class="b " style="left:443.90px;top:319.50px;width:1.00px;height:40.00px;background:#d4d4d4"></div>
<div class="b " style="left:487.70px;top:319.50px;width:1.00px;height:40.00px;background:#d4d4d4"></div>
<div class="b " style="left:525.90px;top:319.50px;width:1.00px;height:40.00px;background:#d4d4d4"></div>
<div class="b " style="left:563.90px;top:319.50px;width:1.00px;height:40.00px;background:#d4d4d4"></div>
<div class="b " style="left:601.90px;top:319.50px;width:1.00px;height:40.00px;background:#d4d4d4"></div>
<div class="b " style="left:639.80px;top:319.50px;width:1.00px;height:40.00px;background:#d4d4d4"></div>
<div class="b " style="left:677.80px;top:319.50px;width:1.00px;height:40.00px;background:#d4d4d4"></div>
<div class="b " style="left:716.00px;top:319.50px;width:1.00px;height:40.00px;background:#d4d4d4"></div>
<svg class="b" style="left:29.00px;top:322.60px" width="5.4" height="5.4" viewBox="0 0 6 6"><rect x="0.4" y="0.4" width="5.2" height="5.2" rx="0.600" fill="#e3e9f6" stroke="#a4abba" stroke-width="0.800"/><path d="M1.700 3h2.600M3 1.700v2.600" stroke="#5570b3" stroke-width="0.800"/></svg>
<svg class="b" style="left:36.00px;top:322.60px" width="5.4" height="5.4" viewBox="0 0 6 6"><rect x="0.4" y="0.4" width="5.2" height="5.2" rx="0.600" fill="#e3e9f6" stroke="#a4abba" stroke-width="0.800"/><path d="M1.700 3h2.600M3 1.700v2.600" stroke="#5570b3" stroke-width="0.800"/></svg>
<div class="t c" style="top:320.10px;line-height:12px;height:12px;letter-spacing:-0.151px;left:43.00px;">ФЕР06-01-024-03</div>
<div class="t c" style="top:320.10px;line-height:12px;height:12px;letter-spacing:-0.141px;left:147.30px;">до 3 м, толщиной до 300 мм</div>
<div class="t c" style="top:320.10px;line-height:12px;height:12px;letter-spacing:-0.139px;left:371.53px;width:70px;text-align:center;">100 м3 бетона,</div>
<div class="t c" style="top:329.50px;line-height:12px;height:12px;letter-spacing:-0.142px;left:371.53px;width:70px;text-align:center;">бутобетона и</div>
<div class="t c" style="top:338.90px;line-height:12px;height:12px;letter-spacing:-0.146px;left:371.53px;width:70px;text-align:center;">железобетона в</div>
<div class="t c" style="top:348.30px;line-height:12px;height:12px;letter-spacing:-0.157px;left:371.52px;width:70px;text-align:center;">деле</div>
<div class="t c" style="top:320.10px;line-height:12px;height:12px;letter-spacing:-0.140px;left:427.06px;width:60px;text-align:right;">147 742,24</div>
<div class="t c" style="top:320.10px;line-height:12px;height:12px;letter-spacing:-0.136px;left:465.26px;width:60px;text-align:right;">9 192,99</div>
<div class="t c" style="top:320.10px;line-height:12px;height:12px;letter-spacing:-0.136px;left:503.26px;width:60px;text-align:right;">4 445,12</div>
<div class="t c" style="top:320.10px;line-height:12px;height:12px;letter-spacing:-0.143px;left:541.26px;width:60px;text-align:right;">510,22</div>
<div class="t c" style="top:320.10px;line-height:12px;height:12px;letter-spacing:-0.138px;left:579.16px;width:60px;text-align:right;">134 104,1</div>
<div class="t c" style="top:329.50px;line-height:12px;height:12px;left:579.30px;width:60px;text-align:right;">3</div>
<div class="t c" style="top:320.10px;line-height:12px;height:12px;letter-spacing:-0.145px;left:617.16px;width:60px;text-align:right;">1051,83</div>
<div class="t c" style="top:320.10px;line-height:12px;height:12px;letter-spacing:-0.140px;left:655.36px;width:60px;text-align:right;">37,85</div>
<div class="b " style="left:0.00px;top:400.00px;width:716.50px;height:1.00px;background:#d4d4d4"></div>
<div class="b " style="left:146.00px;top:359.50px;width:1.00px;height:41.00px;background:#d4d4d4"></div>
<div class="b " style="left:370.30px;top:359.50px;width:1.00px;height:41.00px;background:#d4d4d4"></div>
<div class="b " style="left:443.90px;top:359.50px;width:1.00px;height:41.00px;background:#d4d4d4"></div>
<div class="b " style="left:487.70px;top:359.50px;width:1.00px;height:41.00px;background:#d4d4d4"></div>
<div class="b " style="left:525.90px;top:359.50px;width:1.00px;height:41.00px;background:#d4d4d4"></div>
<div class="b " style="left:563.90px;top:359.50px;width:1.00px;height:41.00px;background:#d4d4d4"></div>
<div class="b " style="left:601.90px;top:359.50px;width:1.00px;height:41.00px;background:#d4d4d4"></div>
<div class="b " style="left:639.80px;top:359.50px;width:1.00px;height:41.00px;background:#d4d4d4"></div>
<div class="b " style="left:677.80px;top:359.50px;width:1.00px;height:41.00px;background:#d4d4d4"></div>
<div class="b " style="left:716.00px;top:359.50px;width:1.00px;height:41.00px;background:#d4d4d4"></div>
<svg class="b" style="left:29.00px;top:362.60px" width="5.4" height="5.4" viewBox="0 0 6 6"><rect x="0.4" y="0.4" width="5.2" height="5.2" rx="0.600" fill="#e3e9f6" stroke="#a4abba" stroke-width="0.800"/><path d="M1.700 3h2.600M3 1.700v2.600" stroke="#5570b3" stroke-width="0.800"/></svg>
<svg class="b" style="left:36.00px;top:362.60px" width="5.4" height="5.4" viewBox="0 0 6 6"><rect x="0.4" y="0.4" width="5.2" height="5.2" rx="0.600" fill="#e3e9f6" stroke="#a4abba" stroke-width="0.800"/><path d="M1.700 3h2.600M3 1.700v2.600" stroke="#5570b3" stroke-width="0.800"/></svg>
<div class="t c" style="top:360.10px;line-height:12px;height:12px;letter-spacing:-0.151px;left:43.00px;">ФЕР06-01-024-04</div>
<div class="t c" style="top:360.10px;line-height:12px;height:12px;letter-spacing:-0.141px;left:147.30px;">до 3 м, толщиной до 500 мм</div>
<div class="t c" style="top:360.10px;line-height:12px;height:12px;letter-spacing:-0.139px;left:371.53px;width:70px;text-align:center;">100 м3 бетона,</div>
<div class="t c" style="top:369.50px;line-height:12px;height:12px;letter-spacing:-0.142px;left:371.53px;width:70px;text-align:center;">бутобетона и</div>
<div class="t c" style="top:378.90px;line-height:12px;height:12px;letter-spacing:-0.146px;left:371.53px;width:70px;text-align:center;">железобетона в</div>
<div class="t c" style="top:388.30px;line-height:12px;height:12px;letter-spacing:-0.157px;left:371.52px;width:70px;text-align:center;">деле</div>
<div class="t c" style="top:360.10px;line-height:12px;height:12px;letter-spacing:-0.140px;left:427.06px;width:60px;text-align:right;">130 236,14</div>
<div class="t c" style="top:360.10px;line-height:12px;height:12px;letter-spacing:-0.136px;left:465.26px;width:60px;text-align:right;">6 105,41</div>
<div class="t c" style="top:360.10px;line-height:12px;height:12px;letter-spacing:-0.136px;left:503.26px;width:60px;text-align:right;">3 781,30</div>
<div class="t c" style="top:360.10px;line-height:12px;height:12px;letter-spacing:-0.143px;left:541.26px;width:60px;text-align:right;">449,76</div>
<div class="t c" style="top:360.10px;line-height:12px;height:12px;letter-spacing:-0.138px;left:579.16px;width:60px;text-align:right;">120 349,4</div>
<div class="t c" style="top:369.50px;line-height:12px;height:12px;left:579.30px;width:60px;text-align:right;">3</div>
<div class="t c" style="top:360.10px;line-height:12px;height:12px;letter-spacing:-0.143px;left:617.16px;width:60px;text-align:right;">698,56</div>
<div class="t c" style="top:360.10px;line-height:12px;height:12px;letter-spacing:-0.140px;left:655.36px;width:60px;text-align:right;">33,39</div>
<div class="b " style="left:0.00px;top:439.90px;width:716.50px;height:1.00px;background:#d4d4d4"></div>
<div class="b " style="left:146.00px;top:400.50px;width:1.00px;height:39.90px;background:#d4d4d4"></div>
<div class="b " style="left:370.30px;top:400.50px;width:1.00px;height:39.90px;background:#d4d4d4"></div>
<div class="b " style="left:443.90px;top:400.50px;width:1.00px;height:39.90px;background:#d4d4d4"></div>
<div class="b " style="left:487.70px;top:400.50px;width:1.00px;height:39.90px;background:#d4d4d4"></div>
<div class="b " style="left:525.90px;top:400.50px;width:1.00px;height:39.90px;background:#d4d4d4"></div>
<div class="b " style="left:563.90px;top:400.50px;width:1.00px;height:39.90px;background:#d4d4d4"></div>
<div class="b " style="left:601.90px;top:400.50px;width:1.00px;height:39.90px;background:#d4d4d4"></div>
<div class="b " style="left:639.80px;top:400.50px;width:1.00px;height:39.90px;background:#d4d4d4"></div>
<div class="b " style="left:677.80px;top:400.50px;width:1.00px;height:39.90px;background:#d4d4d4"></div>
<div class="b " style="left:716.00px;top:400.50px;width:1.00px;height:39.90px;background:#d4d4d4"></div>
<svg class="b" style="left:29.00px;top:403.60px" width="5.4" height="5.4" viewBox="0 0 6 6"><rect x="0.4" y="0.4" width="5.2" height="5.2" rx="0.600" fill="#e3e9f6" stroke="#a4abba" stroke-width="0.800"/><path d="M1.700 3h2.600M3 1.700v2.600" stroke="#5570b3" stroke-width="0.800"/></svg>
<svg class="b" style="left:36.00px;top:403.60px" width="5.4" height="5.4" viewBox="0 0 6 6"><rect x="0.4" y="0.4" width="5.2" height="5.2" rx="0.600" fill="#e3e9f6" stroke="#a4abba" stroke-width="0.800"/><path d="M1.700 3h2.600M3 1.700v2.600" stroke="#5570b3" stroke-width="0.800"/></svg>
<div class="t c" style="top:401.10px;line-height:12px;height:12px;letter-spacing:-0.151px;left:43.00px;">ФЕР06-01-024-05</div>
<div class="t c" style="top:401.10px;line-height:12px;height:12px;letter-spacing:-0.142px;left:147.30px;">до 3 м, толщиной до 1000 мм</div>
<div class="t c" style="top:401.10px;line-height:12px;height:12px;letter-spacing:-0.139px;left:371.53px;width:70px;text-align:center;">100 м3 бетона,</div>
<div class="t c" style="top:410.50px;line-height:12px;height:12px;letter-spacing:-0.142px;left:371.53px;width:70px;text-align:center;">бутобетона и</div>
<div class="t c" style="top:419.90px;line-height:12px;height:12px;letter-spacing:-0.146px;left:371.53px;width:70px;text-align:center;">железобетона в</div>
<div class="t c" style="top:429.30px;line-height:12px;height:12px;letter-spacing:-0.157px;left:371.52px;width:70px;text-align:center;">деле</div>
<div class="t c" style="top:401.10px;line-height:12px;height:12px;letter-spacing:-0.138px;left:427.06px;width:60px;text-align:right;">112 972,38</div>
<div class="t c" style="top:401.10px;line-height:12px;height:12px;letter-spacing:-0.136px;left:465.26px;width:60px;text-align:right;">4 671,88</div>
<div class="t c" style="top:401.10px;line-height:12px;height:12px;letter-spacing:-0.136px;left:503.26px;width:60px;text-align:right;">3 003,28</div>
<div class="t c" style="top:401.10px;line-height:12px;height:12px;letter-spacing:-0.143px;left:541.26px;width:60px;text-align:right;">363,42</div>
<div class="t c" style="top:401.10px;line-height:12px;height:12px;letter-spacing:-0.138px;left:579.16px;width:60px;text-align:right;">105 297,2</div>
<div class="t c" style="top:410.50px;line-height:12px;height:12px;left:579.30px;width:60px;text-align:right;">2</div>
<div class="t c" style="top:401.10px;line-height:12px;height:12px;letter-spacing:-0.143px;left:617.16px;width:60px;text-align:right;">534,54</div>
<div class="t c" style="top:401.10px;line-height:12px;height:12px;letter-spacing:-0.140px;left:655.36px;width:60px;text-align:right;">26,98</div>
<div class="b " style="left:0.00px;top:480.70px;width:716.50px;height:1.00px;background:#d4d4d4"></div>
<div class="b " style="left:146.00px;top:440.40px;width:1.00px;height:40.80px;background:#d4d4d4"></div>
<div class="b " style="left:370.30px;top:440.40px;width:1.00px;height:40.80px;background:#d4d4d4"></div>
<div class="b " style="left:443.90px;top:440.40px;width:1.00px;height:40.80px;background:#d4d4d4"></div>
<div class="b " style="left:487.70px;top:440.40px;width:1.00px;height:40.80px;background:#d4d4d4"></div>
<div class="b " style="left:525.90px;top:440.40px;width:1.00px;height:40.80px;background:#d4d4d4"></div>
<div class="b " style="left:563.90px;top:440.40px;width:1.00px;height:40.80px;background:#d4d4d4"></div>
<div class="b " style="left:601.90px;top:440.40px;width:1.00px;height:40.80px;background:#d4d4d4"></div>
<div class="b " style="left:639.80px;top:440.40px;width:1.00px;height:40.80px;background:#d4d4d4"></div>
<div class="b " style="left:677.80px;top:440.40px;width:1.00px;height:40.80px;background:#d4d4d4"></div>
<div class="b " style="left:716.00px;top:440.40px;width:1.00px;height:40.80px;background:#d4d4d4"></div>
<svg class="b" style="left:29.00px;top:443.50px" width="5.4" height="5.4" viewBox="0 0 6 6"><rect x="0.4" y="0.4" width="5.2" height="5.2" rx="0.600" fill="#e3e9f6" stroke="#a4abba" stroke-width="0.800"/><path d="M1.700 3h2.600M3 1.700v2.600" stroke="#5570b3" stroke-width="0.800"/></svg>
<svg class="b" style="left:36.00px;top:443.50px" width="5.4" height="5.4" viewBox="0 0 6 6"><rect x="0.4" y="0.4" width="5.2" height="5.2" rx="0.600" fill="#e3e9f6" stroke="#a4abba" stroke-width="0.800"/><path d="M1.700 3h2.600M3 1.700v2.600" stroke="#5570b3" stroke-width="0.800"/></svg>
<div class="t c" style="top:441.00px;line-height:12px;height:12px;letter-spacing:-0.151px;left:43.00px;">ФЕР06-01-024-06</div>
<div class="t c" style="top:441.00px;line-height:12px;height:12px;letter-spacing:-0.141px;left:147.30px;">до 6 м, толщиной до 300 мм</div>
<div class="t c" style="top:441.00px;line-height:12px;height:12px;letter-spacing:-0.139px;left:371.53px;width:70px;text-align:center;">100 м3 бетона,</div>
<div class="t c" style="top:450.40px;line-height:12px;height:12px;letter-spacing:-0.142px;left:371.53px;width:70px;text-align:center;">бутобетона и</div>
<div class="t c" style="top:459.80px;line-height:12px;height:12px;letter-spacing:-0.146px;left:371.53px;width:70px;text-align:center;">железобетона в</div>
<div class="t c" style="top:469.20px;line-height:12px;height:12px;letter-spacing:-0.157px;left:371.52px;width:70px;text-align:center;">деле</div>
<div class="t c" style="top:441.00px;line-height:12px;height:12px;letter-spacing:-0.140px;left:427.06px;width:60px;text-align:right;">165 269,32</div>
<div class="t c" style="top:441.00px;line-height:12px;height:12px;letter-spacing:-0.136px;left:465.26px;width:60px;text-align:right;">9 479,32</div>
<div class="t c" style="top:441.00px;line-height:12px;height:12px;letter-spacing:-0.136px;left:503.26px;width:60px;text-align:right;">5 025,26</div>
<div class="t c" style="top:441.00px;line-height:12px;height:12px;letter-spacing:-0.143px;left:541.26px;width:60px;text-align:right;">558,48</div>
<div class="t c" style="top:441.00px;line-height:12px;height:12px;letter-spacing:-0.138px;left:579.16px;width:60px;text-align:right;">150 764,7</div>
<div class="t c" style="top:450.40px;line-height:12px;height:12px;left:579.30px;width:60px;text-align:right;">4</div>
<div class="t c" style="top:441.00px;line-height:12px;height:12px;letter-spacing:-0.145px;left:617.16px;width:60px;text-align:right;">1084,59</div>
<div class="t c" style="top:441.00px;line-height:12px;height:12px;letter-spacing:-0.140px;left:655.36px;width:60px;text-align:right;">41,43</div>
<div class="b " style="left:0.00px;top:520.90px;width:716.50px;height:1.00px;background:#d4d4d4"></div>
<div class="b " style="left:146.00px;top:481.20px;width:1.00px;height:40.20px;background:#d4d4d4"></div>
<div class="b " style="left:370.30px;top:481.20px;width:1.00px;height:40.20px;background:#d4d4d4"></div>
<div class="b " style="left:443.90px;top:481.20px;width:1.00px;height:40.20px;background:#d4d4d4"></div>
<div class="b " style="left:487.70px;top:481.20px;width:1.00px;height:40.20px;background:#d4d4d4"></div>
<div class="b " style="left:525.90px;top:481.20px;width:1.00px;height:40.20px;background:#d4d4d4"></div>
<div class="b " style="left:563.90px;top:481.20px;width:1.00px;height:40.20px;background:#d4d4d4"></div>
<div class="b " style="left:601.90px;top:481.20px;width:1.00px;height:40.20px;background:#d4d4d4"></div>
<div class="b " style="left:639.80px;top:481.20px;width:1.00px;height:40.20px;background:#d4d4d4"></div>
<div class="b " style="left:677.80px;top:481.20px;width:1.00px;height:40.20px;background:#d4d4d4"></div>
<div class="b " style="left:716.00px;top:481.20px;width:1.00px;height:40.20px;background:#d4d4d4"></div>
<svg class="b" style="left:29.00px;top:484.30px" width="5.4" height="5.4" viewBox="0 0 6 6"><rect x="0.4" y="0.4" width="5.2" height="5.2" rx="0.600" fill="#e3e9f6" stroke="#a4abba" stroke-width="0.800"/><path d="M1.700 3h2.600M3 1.700v2.600" stroke="#5570b3" stroke-width="0.800"/></svg>
<svg class="b" style="left:36.00px;top:484.30px" width="5.4" height="5.4" viewBox="0 0 6 6"><rect x="0.4" y="0.4" width="5.2" height="5.2" rx="0.600" fill="#e3e9f6" stroke="#a4abba" stroke-width="0.800"/><path d="M1.700 3h2.600M3 1.700v2.600" stroke="#5570b3" stroke-width="0.800"/></svg>
<div class="t c" style="top:481.80px;line-height:12px;height:12px;letter-spacing:-0.151px;left:43.00px;">ФЕР06-01-024-07</div>
<div class="t c" style="top:481.80px;line-height:12px;height:12px;letter-spacing:-0.141px;left:147.30px;">до 6 м, толщиной до 500 мм</div>
<div class="t c" style="top:481.80px;line-height:12px;height:12px;letter-spacing:-0.139px;left:371.53px;width:70px;text-align:center;">100 м3 бетона,</div>
<div class="t c" style="top:491.20px;line-height:12px;height:12px;letter-spacing:-0.142px;left:371.53px;width:70px;text-align:center;">бутобетона и</div>
<div class="t c" style="top:500.60px;line-height:12px;height:12px;letter-spacing:-0.146px;left:371.53px;width:70px;text-align:center;">железобетона в</div>
<div class="t c" style="top:510.00px;line-height:12px;height:12px;letter-spacing:-0.157px;left:371.52px;width:70px;text-align:center;">деле</div>
<div class="t c" style="top:481.80px;line-height:12px;height:12px;letter-spacing:-0.140px;left:427.06px;width:60px;text-align:right;">146 488,69</div>
<div class="t c" style="top:481.80px;line-height:12px;height:12px;letter-spacing:-0.134px;left:465.27px;width:60px;text-align:right;">6 311,68</div>
<div class="t c" style="top:481.80px;line-height:12px;height:12px;letter-spacing:-0.136px;left:503.26px;width:60px;text-align:right;">4 233,88</div>
<div class="t c" style="top:481.80px;line-height:12px;height:12px;letter-spacing:-0.143px;left:541.26px;width:60px;text-align:right;">485,19</div>
<div class="t c" style="top:481.80px;line-height:12px;height:12px;letter-spacing:-0.138px;left:579.16px;width:60px;text-align:right;">135 943,1</div>
<div class="t c" style="top:491.20px;line-height:12px;height:12px;left:579.30px;width:60px;text-align:right;">3</div>
<div class="t c" style="top:481.80px;line-height:12px;height:12px;letter-spacing:-0.143px;left:617.16px;width:60px;text-align:right;">722,16</div>
<div class="t c" style="top:481.80px;line-height:12px;height:12px;letter-spacing:-0.140px;left:655.36px;width:60px;text-align:right;">36,02</div>
<div class="b " style="left:0.00px;top:560.90px;width:716.50px;height:1.00px;background:#d4d4d4"></div>
<div class="b " style="left:146.00px;top:521.40px;width:1.00px;height:40.00px;background:#d4d4d4"></div>
<div class="b " style="left:370.30px;top:521.40px;width:1.00px;height:40.00px;background:#d4d4d4"></div>
<div class="b " style="left:443.90px;top:521.40px;width:1.00px;height:40.00px;background:#d4d4d4"></div>
<div class="b " style="left:487.70px;top:521.40px;width:1.00px;height:40.00px;background:#d4d4d4"></div>
<div class="b " style="left:525.90px;top:521.40px;width:1.00px;height:40.00px;background:#d4d4d4"></div>
<div class="b " style="left:563.90px;top:521.40px;width:1.00px;height:40.00px;background:#d4d4d4"></div>
<div class="b " style="left:601.90px;top:521.40px;width:1.00px;height:40.00px;background:#d4d4d4"></div>
<div class="b " style="left:639.80px;top:521.40px;width:1.00px;height:40.00px;background:#d4d4d4"></div>
<div class="b " style="left:677.80px;top:521.40px;width:1.00px;height:40.00px;background:#d4d4d4"></div>
<div class="b " style="left:716.00px;top:521.40px;width:1.00px;height:40.00px;background:#d4d4d4"></div>
<svg class="b" style="left:29.00px;top:524.50px" width="5.4" height="5.4" viewBox="0 0 6 6"><rect x="0.4" y="0.4" width="5.2" height="5.2" rx="0.600" fill="#e3e9f6" stroke="#a4abba" stroke-width="0.800"/><path d="M1.700 3h2.600M3 1.700v2.600" stroke="#5570b3" stroke-width="0.800"/></svg>
<svg class="b" style="left:36.00px;top:524.50px" width="5.4" height="5.4" viewBox="0 0 6 6"><rect x="0.4" y="0.4" width="5.2" height="5.2" rx="0.600" fill="#e3e9f6" stroke="#a4abba" stroke-width="0.800"/><path d="M1.700 3h2.600M3 1.700v2.600" stroke="#5570b3" stroke-width="0.800"/></svg>
<div class="t c" style="top:522.00px;line-height:12px;height:12px;letter-spacing:-0.151px;left:43.00px;">ФЕР06-01-024-08</div>
<div class="t c" style="top:522.00px;line-height:12px;height:12px;letter-spacing:-0.142px;left:147.30px;">до 6 м, толщиной до 1000 мм</div>
<div class="t c" style="top:522.00px;line-height:12px;height:12px;letter-spacing:-0.139px;left:371.53px;width:70px;text-align:center;">100 м3 бетона,</div>
<div class="t c" style="top:531.40px;line-height:12px;height:12px;letter-spacing:-0.142px;left:371.53px;width:70px;text-align:center;">бутобетона и</div>
<div class="t c" style="top:540.80px;line-height:12px;height:12px;letter-spacing:-0.146px;left:371.53px;width:70px;text-align:center;">железобетона в</div>
<div class="t c" style="top:550.20px;line-height:12px;height:12px;letter-spacing:-0.157px;left:371.52px;width:70px;text-align:center;">деле</div>
<div class="t c" style="top:522.00px;line-height:12px;height:12px;letter-spacing:-0.140px;left:427.06px;width:60px;text-align:right;">123 855,78</div>
<div class="t c" style="top:522.00px;line-height:12px;height:12px;letter-spacing:-0.136px;left:465.26px;width:60px;text-align:right;">4 878,14</div>
<div class="t c" style="top:522.00px;line-height:12px;height:12px;letter-spacing:-0.136px;left:503.26px;width:60px;text-align:right;">3 283,55</div>
<div class="t c" style="top:522.00px;line-height:12px;height:12px;letter-spacing:-0.143px;left:541.26px;width:60px;text-align:right;">384,84</div>
<div class="t c" style="top:522.00px;line-height:12px;height:12px;letter-spacing:-0.136px;left:579.16px;width:60px;text-align:right;">115 694,0</div>
<div class="t c" style="top:531.40px;line-height:12px;height:12px;left:579.30px;width:60px;text-align:right;">9</div>
<div class="t c" style="top:522.00px;line-height:12px;height:12px;letter-spacing:-0.143px;left:617.16px;width:60px;text-align:right;">558,14</div>
<div class="t c" style="top:522.00px;line-height:12px;height:12px;letter-spacing:-0.140px;left:655.36px;width:60px;text-align:right;">28,57</div>
<div class="b " style="left:146.00px;top:561.40px;width:1.00px;height:11.60px;background:#d4d4d4"></div>
<div class="b " style="left:370.30px;top:561.40px;width:1.00px;height:11.60px;background:#d4d4d4"></div>
<div class="b " style="left:443.90px;top:561.40px;width:1.00px;height:11.60px;background:#d4d4d4"></div>
<div class="b " style="left:487.70px;top:561.40px;width:1.00px;height:11.60px;background:#d4d4d4"></div>
<div class="b " style="left:525.90px;top:561.40px;width:1.00px;height:11.60px;background:#d4d4d4"></div>
<div class="b " style="left:563.90px;top:561.40px;width:1.00px;height:11.60px;background:#d4d4d4"></div>
<div class="b " style="left:601.90px;top:561.40px;width:1.00px;height:11.60px;background:#d4d4d4"></div>
<div class="b " style="left:639.80px;top:561.40px;width:1.00px;height:11.60px;background:#d4d4d4"></div>
<div class="b " style="left:677.80px;top:561.40px;width:1.00px;height:11.60px;background:#d4d4d4"></div>
<div class="b " style="left:716.00px;top:561.40px;width:1.00px;height:11.60px;background:#d4d4d4"></div>
<svg class="b" style="left:29.00px;top:564.50px" width="5.4" height="5.4" viewBox="0 0 6 6"><rect x="0.4" y="0.4" width="5.2" height="5.2" rx="0.600" fill="#e3e9f6" stroke="#a4abba" stroke-width="0.800"/><path d="M1.700 3h2.600M3 1.700v2.600" stroke="#5570b3" stroke-width="0.800"/></svg>
<svg class="b" style="left:36.00px;top:564.50px" width="5.4" height="5.4" viewBox="0 0 6 6"><rect x="0.4" y="0.4" width="5.2" height="5.2" rx="0.600" fill="#e3e9f6" stroke="#a4abba" stroke-width="0.800"/><path d="M1.700 3h2.600M3 1.700v2.600" stroke="#5570b3" stroke-width="0.800"/></svg>
<div class="t c" style="top:562.00px;line-height:12px;height:12px;letter-spacing:-0.151px;left:43.00px;">ФЕР06-01-024-09</div>
<div class="t c" style="top:562.00px;line-height:12px;height:12px;letter-spacing:-0.143px;left:147.30px;">до 6 м, толщиной более 1000 мм</div>
<div class="t c" style="top:562.00px;line-height:12px;height:12px;letter-spacing:-0.139px;left:371.53px;width:70px;text-align:center;">100 м3 бетона,</div>
<div class="t c" style="top:562.00px;line-height:12px;height:12px;letter-spacing:-0.140px;left:427.06px;width:60px;text-align:right;">101 368,55</div>
<div class="t c" style="top:562.00px;line-height:12px;height:12px;letter-spacing:-0.136px;left:465.26px;width:60px;text-align:right;">3 650,87</div>
<div class="t c" style="top:562.00px;line-height:12px;height:12px;letter-spacing:-0.136px;left:503.26px;width:60px;text-align:right;">2 446,78</div>
<div class="t c" style="top:562.00px;line-height:12px;height:12px;letter-spacing:-0.143px;left:541.26px;width:60px;text-align:right;">315,10</div>
<div class="t c" style="top:562.00px;line-height:12px;height:12px;letter-spacing:-0.138px;left:579.16px;width:60px;text-align:right;">95 270,90</div>
<div class="t c" style="top:562.00px;line-height:12px;height:12px;letter-spacing:-0.143px;left:617.16px;width:60px;text-align:right;">417,72</div>
<div class="t c" style="top:562.00px;line-height:12px;height:12px;letter-spacing:-0.140px;left:655.36px;width:60px;text-align:right;">23,41</div>
<div class="b " style="left:0.00px;top:573.00px;width:1499.00px;height:12.00px;background:#f0f0f0"></div>
<div class="b " style="left:12.30px;top:573.40px;width:208.70px;height:11.60px;background:#cdcdcd"></div>
<svg class="b" style="left:3px;top:575.5px" width="6" height="7" viewBox="0 0 6 7"><path d="M4.5 0.7l-3 2.8 3 2.8" stroke="#505050" stroke-width="1.3" fill="none"/></svg>
<svg class="b" style="left:1477px;top:575.5px" width="6" height="7" viewBox="0 0 6 7"><path d="M1.5 0.7l3 2.8-3 2.8" stroke="#505050" stroke-width="1.3" fill="none"/></svg>
<div class="b " style="left:1487.00px;top:149.00px;width:12.00px;height:424.00px;background:#f0f0f0"></div>
<div class="b " style="left:1487.50px;top:229.70px;width:11.50px;height:12.00px;background:#cdcdcd"></div>
<svg class="b" style="left:1489.5px;top:151.5px" width="7" height="6" viewBox="0 0 7 6"><path d="M0.7 4.5l2.8-3 2.8 3" stroke="#505050" stroke-width="1.3" fill="none"/></svg>
<svg class="b" style="left:1489.5px;top:563px" width="7" height="6" viewBox="0 0 7 6"><path d="M0.7 1.5l2.8 3 2.8-3" stroke="#505050" stroke-width="1.3" fill="none"/></svg>
<div class="b " style="left:724.00px;top:154.00px;width:584.50px;height:391.50px;background:#f0f0f0;border:1px solid #ebbd8c;box-shadow:0 3px 13px 1px rgba(0,0,0,0.27)"></div>
<div class="b " style="left:725.00px;top:155.00px;width:582.50px;height:21.00px;background:#fff"></div>
<svg class="b" style="left:729.900px;top:159.800px" width="12" height="10.400" viewBox="0 0 12 10.400"><rect x="0" y="7.600" width="12" height="2.800" fill="#3568c6"/><rect x="0" y="3.600" width="3.100" height="5" fill="#5a8fe2"/><rect x="5.600" y="4.600" width="3.600" height="4" fill="#5a8fe2"/><rect x="0" y="0" width="3" height="3.300" fill="#e2432f"/><rect x="3" y="1.300" width="6.100" height="3.300" fill="#e2432f"/><rect x="3.500" y="4.500" width="2.200" height="2.900" fill="#d93a28"/><path d="M0.800 1h0.800M3.800 2.300h0.800M6.300 2.300h0.800" stroke="#f7c0b6" stroke-width="0.600"/></svg>
<div class="t dl" style="top:160.00px;line-height:12px;height:12px;font-size:9.1px;letter-spacing:-0.121px;left:745.00px;">Параметры сборника - ФЕР06. Бетонные и железобетонные конструкции монолитные</div>
<svg class="b" style="left:1290.5px;top:160.5px" width="9" height="9" viewBox="0 0 9 9"><path d="M0.8 0.8l7.4 7.4M8.2 0.8l-7.4 7.4" stroke="#222" stroke-width="1.1" fill="none"/></svg>
<div class="b " style="left:725.00px;top:176.00px;width:110.00px;height:343.60px;background:#fff;border:1px solid #a9afba"></div>
<div class="b " style="left:726.60px;top:351.00px;width:107.40px;height:15.80px;background:#d9d9d9"></div>
<div class="t mn" style="top:179.60px;line-height:12px;height:12px;left:740.00px;">Общие</div>
<div class="t mn" style="top:195.36px;line-height:12px;height:12px;left:740.00px;">Зоны</div>
<div class="t mn" style="top:211.12px;line-height:12px;height:12px;left:740.00px;">Измерители</div>
<div class="t mn" style="top:226.88px;line-height:12px;height:12px;left:740.00px;">Ресурсы</div>
<div class="t mn" style="top:242.64px;line-height:12px;height:12px;left:751.00px;">Трудозатраты</div>
<div class="t mn" style="top:258.40px;line-height:12px;height:12px;left:751.00px;">Тз. машинистов</div>
<div class="t mn" style="top:274.16px;line-height:12px;height:12px;left:751.00px;">Машины</div>
<div class="t mn" style="top:289.92px;line-height:12px;height:12px;left:751.00px;">Материалы</div>
<div class="t mn" style="top:305.68px;line-height:12px;height:12px;left:740.00px;">Коэффициенты</div>
<div class="t mn" style="top:321.44px;line-height:12px;height:12px;left:740.00px;">Состав работ</div>
<div class="t mn" style="top:337.20px;line-height:12px;height:12px;left:740.00px;">Примечания</div>
<div class="t mn" style="top:352.96px;line-height:12px;height:12px;left:740.00px;">Оглавление</div>
<div class="t mn" style="top:368.72px;line-height:12px;height:12px;left:740.00px;">История</div>
<div class="t mn" style="top:384.48px;line-height:12px;height:12px;left:740.00px;">Комментарий</div>
<svg class="b" style="left:730px;top:230.5px" width="7" height="5" viewBox="0 0 7 5"><path d="M0.700 1l2.800 2.800 2.800-2.800" stroke="#3a3a3a" stroke-width="1" fill="none"/></svg>
<div class="b " style="left:837.40px;top:176.30px;width:470.10px;height:14.50px;background:#9b9b9b"></div>
<div class="t db" style="top:177.80px;line-height:12px;height:12px;font-size:8.66px;left:841.00px;color:#111">Оглавление сборника</div>
<div class="b " style="left:837.40px;top:190.80px;width:470.10px;height:19.00px;background:linear-gradient(#edf3fc,#dfe9f7 60%,#d3dfef);border-bottom:1px solid #b9c6da"></div>
<svg class="b" style="left:841.5px;top:196px" width="10" height="10" viewBox="0 0 10 10"><circle cx="5" cy="5" r="4.2" fill="#eef4fd" stroke="#9fb6dc" stroke-width="0.8"/><path d="M2.6 5h4.2M5.2 3.2l1.8 1.8-1.8 1.8" stroke="#4a78c4" stroke-width="0.9" fill="none"/></svg>
<div class="t mn" style="top:194.80px;line-height:12px;height:12px;font-size:8.75px;left:856.00px;color:#2b3a52">Перейти к разделу</div>
<div class="b " style="left:837.40px;top:209.80px;width:457.80px;height:12.30px;background:linear-gradient(#f3f7fd,#e1e9f5)"></div>
<div class="t h" style="top:210.30px;line-height:12px;height:12px;letter-spacing:-0.173px;left:1016.21px;width:100px;text-align:center;">Наименование</div>
<div class="b " style="left:837.40px;top:222.10px;width:457.80px;height:297.20px;background:#fff"></div>
<div class="b " style="left:837.40px;top:222.10px;width:457.80px;height:22.10px;background:#bfdcbf;border-bottom:1px solid #b3cdb3"></div>
<div class="t db" style="top:223.00px;line-height:12px;height:12px;left:859.30px;">ТАБЛИЦА ФЕР06-01-009. Устройство фундаментов и сооружений на предприятиях целлюлозно-бумажной</div>
<div class="t db" style="top:232.50px;line-height:12px;height:12px;left:859.30px;">промышленности</div>
<svg class="b" style="left:845.50px;top:247.95px" width="5.4" height="5.4" viewBox="0 0 6 6"><rect x="0.4" y="0.4" width="5.2" height="5.2" rx="0.8" fill="#e6edf8" stroke="#9aa8c2" stroke-width="0.8"/><path d="M1.5 3h3" stroke="#4766a6" stroke-width="0.8"/></svg>
<div class="t dsb" style="top:245.05px;line-height:12px;height:12px;letter-spacing:-0.211px;left:852.60px;">Подраздел 1.3 ПРОЧИЕ РАБОТЫ</div>
<div class="b " style="left:837.40px;top:256.30px;width:457.80px;height:21.90px;background:#bfdcbf;border-bottom:1px solid #b3cdb3"></div>
<div class="t db" style="top:257.20px;line-height:12px;height:12px;left:859.30px;">ТАБЛИЦА ФЕР06-01-012. Устройство опалубки (снизу) и поддерживающих ее конструкций для высоких</div>
<div class="t db" style="top:266.70px;line-height:12px;height:12px;left:859.30px;">ростверков</div>
<div class="b " style="left:837.40px;top:278.20px;width:457.80px;height:12.20px;background:#bfdcbf;border-bottom:1px solid #b3cdb3"></div>
<div class="t db" style="top:279.10px;line-height:12px;height:12px;left:859.30px;">ТАБЛИЦА ФЕР06-01-013. Устройство подливки толщиной 20 мм</div>
<div class="b " style="left:837.40px;top:290.40px;width:457.80px;height:12.20px;background:#bfdcbf;border-bottom:1px solid #b3cdb3"></div>
<div class="t db" style="top:291.30px;line-height:12px;height:12px;left:859.30px;">ТАБЛИЦА ФЕР06-01-014. Укладка бетона по перекрытиям толщиной 100 мм</div>
<div class="b " style="left:837.40px;top:302.60px;width:457.80px;height:12.30px;background:#bfdcbf;border-bottom:1px solid #b3cdb3"></div>
<div class="t db" style="top:303.50px;line-height:12px;height:12px;left:859.30px;">ТАБЛИЦА ФЕР06-01-015. Установка анкерных болтов</div>
<div class="b " style="left:837.40px;top:314.90px;width:457.80px;height:12.30px;background:#bfdcbf;border-bottom:1px solid #b3cdb3"></div>
<div class="t db" style="top:315.80px;line-height:12px;height:12px;left:859.30px;">ТАБЛИЦА ФЕР06-01-016. Сварка арматуры ванным способом</div>
<div class="b " style="left:837.40px;top:327.20px;width:457.80px;height:12.20px;background:#bfdcbf;border-bottom:1px solid #b3cdb3"></div>
<div class="t db" style="top:328.10px;line-height:12px;height:12px;left:859.30px;">ТАБЛИЦА ФЕР06-01-017. Технологический электропрогрев бетона</div>
<div class="b " style="left:837.40px;top:339.40px;width:457.80px;height:21.90px;background:#bfdcbf;border-bottom:1px solid #b3cdb3"></div>
<div class="t db" style="top:340.30px;line-height:12px;height:12px;left:859.30px;">ТАБЛИЦА ФЕР06-01-018. Устройство деформационного осадочного шва фундаментов под оборудование с</div>
<div class="t db" style="top:349.80px;line-height:12px;height:12px;left:859.30px;">заполнением битумом</div>
<div class="b " style="left:837.40px;top:361.00px;width:457.80px;height:12.50px;background:linear-gradient(#d6ebff,#add6ff);border:1px solid #7da2ce"></div>
<svg class="b" style="left:845.50px;top:365.10px" width="5.4" height="5.4" viewBox="0 0 6 6"><rect x="0.4" y="0.4" width="5.2" height="5.2" rx="0.8" fill="#e6edf8" stroke="#9aa8c2" stroke-width="0.8"/><path d="M1.5 3h3" stroke="#4766a6" stroke-width="0.8"/></svg>
<div class="t dsb" style="top:362.20px;line-height:12px;height:12px;letter-spacing:-0.222px;left:852.60px;">Подраздел 1.4 ПОДПОРНЫЕ СТЕНЫ И СТЕНЫ ПОДВАЛОВ</div>
<div class="b " style="left:837.40px;top:373.50px;width:457.80px;height:12.30px;background:#bfdcbf;border-bottom:1px solid #b3cdb3"></div>
<div class="t db" style="top:374.40px;line-height:12px;height:12px;left:859.30px;">ТАБЛИЦА ФЕР06-01-024. Устройство стен подвалов и подпорных стен</div>
<svg class="b" style="left:845.50px;top:389.60px" width="5.4" height="5.4" viewBox="0 0 6 6"><rect x="0.4" y="0.4" width="5.2" height="5.2" rx="0.8" fill="#e6edf8" stroke="#9aa8c2" stroke-width="0.8"/><path d="M1.5 3h3" stroke="#4766a6" stroke-width="0.8"/></svg>
<div class="t dsb" style="top:386.70px;line-height:12px;height:12px;letter-spacing:-0.211px;left:852.60px;">Подраздел 1.5 КОЛОННЫ</div>
<div class="b " style="left:837.40px;top:398.00px;width:457.80px;height:12.30px;background:#bfdcbf;border-bottom:1px solid #b3cdb3"></div>
<div class="t db" style="top:398.90px;line-height:12px;height:12px;left:859.30px;">ТАБЛИЦА ФЕР06-01-026. Устройство колонн в деревянной опалубке</div>
<div class="b " style="left:837.40px;top:410.30px;width:457.80px;height:12.20px;background:#bfdcbf;border-bottom:1px solid #b3cdb3"></div>
<div class="t db" style="top:411.20px;line-height:12px;height:12px;left:859.30px;">ТАБЛИЦА ФЕР06-01-027. Устройство колонн гражданских зданий в металлической опалубке</div>
<svg class="b" style="left:845.50px;top:426.35px" width="5.4" height="5.4" viewBox="0 0 6 6"><rect x="0.4" y="0.4" width="5.2" height="5.2" rx="0.8" fill="#e6edf8" stroke="#9aa8c2" stroke-width="0.8"/><path d="M1.5 3h3" stroke="#4766a6" stroke-width="0.8"/></svg>
<div class="t dsb" style="top:423.45px;line-height:12px;height:12px;letter-spacing:-0.211px;left:852.60px;">Подраздел 1.6 СТЕНЫ И ПЕРЕГОРОДКИ</div>
<div class="b " style="left:837.40px;top:434.80px;width:457.80px;height:12.30px;background:#bfdcbf;border-bottom:1px solid #b3cdb3"></div>
<div class="t db" style="top:435.70px;line-height:12px;height:12px;left:859.30px;">ТАБЛИЦА ФЕР06-01-030. Устройство стен и перегородок бетонных и легкобетонных</div>
<div class="b " style="left:837.40px;top:447.10px;width:457.80px;height:12.30px;background:#bfdcbf;border-bottom:1px solid #b3cdb3"></div>
<div class="t db" style="top:448.00px;line-height:12px;height:12px;left:859.30px;">ТАБЛИЦА ФЕР06-01-031. Устройство железобетонных стен и перегородок</div>
<svg class="b" style="left:845.50px;top:463.25px" width="5.4" height="5.4" viewBox="0 0 6 6"><rect x="0.4" y="0.4" width="5.2" height="5.2" rx="0.8" fill="#e6edf8" stroke="#9aa8c2" stroke-width="0.8"/><path d="M1.5 3h3" stroke="#4766a6" stroke-width="0.8"/></svg>
<div class="t dsb" style="top:460.35px;line-height:12px;height:12px;letter-spacing:-0.208px;left:852.60px;">Подраздел 1.7 БАЛКИ, ПОЯСА, ПЕРЕМЫЧКИ, РИГЕЛИ</div>
<div class="b " style="left:837.40px;top:471.70px;width:457.80px;height:12.30px;background:#bfdcbf;border-bottom:1px solid #b3cdb3"></div>
<div class="t db" style="top:472.60px;line-height:12px;height:12px;left:859.30px;">ТАБЛИЦА ФЕР06-01-034. Устройство балок, перемычек</div>
<div class="b " style="left:837.40px;top:484.00px;width:457.80px;height:12.30px;background:#bfdcbf;border-bottom:1px solid #b3cdb3"></div>
<div class="t db" style="top:484.90px;line-height:12px;height:12px;left:859.30px;">ТАБЛИЦА ФЕР06-01-035. Устройство поясов</div>
<div class="b " style="left:837.40px;top:496.30px;width:457.80px;height:12.30px;background:#bfdcbf;border-bottom:1px solid #b3cdb3"></div>
<div class="t db" style="top:497.20px;line-height:12px;height:12px;left:859.30px;">ТАБЛИЦА ФЕР06-01-036. Устройство засыпки фундаментных балок</div>
<div class="b " style="left:837.40px;top:508.60px;width:457.80px;height:10.70px;background:#bfdcbf;border-bottom:1px solid #b3cdb3"></div>
<div class="t db" style="top:509.50px;line-height:12px;height:12px;left:859.30px;">ТАБЛИЦА ФЕР06-01-037. Устройство ригелей гражданских зданий в металлической опалубке</div>
<div class="b " style="left:1295.20px;top:209.80px;width:12.30px;height:309.50px;background:#f0f0f0"></div>
<div class="b " style="left:1296.00px;top:247.30px;width:11.30px;height:57.00px;background:#c9c9c9"></div>
<svg class="b" style="left:1298px;top:213px" width="7" height="6" viewBox="0 0 7 6"><path d="M0.7 4.5l2.8-3 2.8 3" stroke="#505050" stroke-width="1.3" fill="none"/></svg>
<svg class="b" style="left:1298px;top:510.5px" width="7" height="6" viewBox="0 0 7 6"><path d="M0.7 1.5l2.8 3 2.8-3" stroke="#505050" stroke-width="1.3" fill="none"/></svg>
<div class="b " style="left:1246.50px;top:524.60px;width:53.20px;height:16.00px;background:#e1e1e1;border:1px solid #adadad"></div>
<div class="t mn" style="top:526.80px;line-height:12px;height:12px;font-size:8.6px;left:1253.00px;width:40px;text-align:center;color:#111">OK</div>
<svg class="b" style="left:0;top:0;filter:drop-shadow(0 1px 1.2px rgba(50,70,100,0.5))" width="1499" height="585" viewBox="0 0 1499 585"><g fill="#e84a42" stroke="none"><path d="M729.7 65.9 L771.6 141.7" stroke="#e84a42" stroke-width="5.3" stroke-linecap="round" fill="none"/><path d="M764.8 147.5 L780.2 139 L780.2 157.6 Z"/><path d="M958 200.2 L992 200.2" stroke="#e84a42" stroke-width="6.2" stroke-linecap="round" fill="none"/><path d="M941.2 200 L957.8 191.3 L957.8 208.7 Z"/></g></svg>
</body></html>
